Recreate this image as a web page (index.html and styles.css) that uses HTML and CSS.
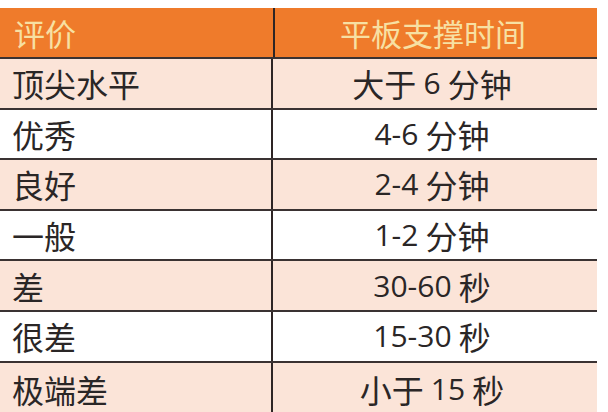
FILE: index.html
```html
<!DOCTYPE html>
<html lang="zh">
<head>
<meta charset="utf-8">
<link rel="stylesheet" href="styles.css">
</head>
<body>
<div class="table">
  <div class="row head">
    <div class="cell left">评价</div>
    <div class="cell right">平板支撑时间</div>
  </div>
  <div class="row tint">
    <div class="cell left">顶尖水平</div>
    <div class="cell right">大于 <span class="num">6</span> 分钟</div>
  </div>
  <div class="row">
    <div class="cell left">优秀</div>
    <div class="cell right"><span class="num">4-6</span> 分钟</div>
  </div>
  <div class="row tint">
    <div class="cell left">良好</div>
    <div class="cell right"><span class="num">2-4</span> 分钟</div>
  </div>
  <div class="row">
    <div class="cell left">一般</div>
    <div class="cell right"><span class="num">1-2</span> 分钟</div>
  </div>
  <div class="row tint">
    <div class="cell left">差</div>
    <div class="cell right"><span class="num">30-60</span> 秒</div>
  </div>
  <div class="row">
    <div class="cell left">很差</div>
    <div class="cell right"><span class="num">15-30</span> 秒</div>
  </div>
  <div class="row tint last">
    <div class="cell left">极端差</div>
    <div class="cell right">小于 <span class="num">15</span> 秒</div>
  </div>
</div>
</body>
</html>
```

FILE: styles.css
```css
html, body {
  margin: 0;
  padding: 0;
  background: #ffffff;
}
body {
  padding-top: 8px;
  font-family: "Noto Sans CJK SC", "Noto Sans", sans-serif;
  color: #2a2626;
}
.table {
  width: 597px;
  display: flex;
  flex-direction: column;
}
.row {
  display: flex;
  height: 48.6px;
  border-top: 2px solid #3a3232;
  background: #ffffff;
}
.row.head {
  height: 49px;
  border-top: none;
  background: #ef7b2b;
  color: #f7e0a3;
}
.row.tint {
  background: #fbe4d8;
}
.row.last {
  height: 52px;
}
.cell {
  display: flex;
  align-items: center;
  font-size: 32px;
  line-height: 1;
  white-space: pre;
}
.left {
  width: 259px;
  padding-left: 12px;
  border-right: 2px solid #2e2525;
}
.head .left {
  padding-left: 14px;
  font-size: 31px;
}
.head .right {
  font-size: 31px;
}
.right {
  flex: 1;
  justify-content: center;
  padding-right: 6px;
}
.num {
  font-family: "Open Sans", "Noto Sans", sans-serif;
  font-weight: 500;
  font-size: 30px;
}
```
